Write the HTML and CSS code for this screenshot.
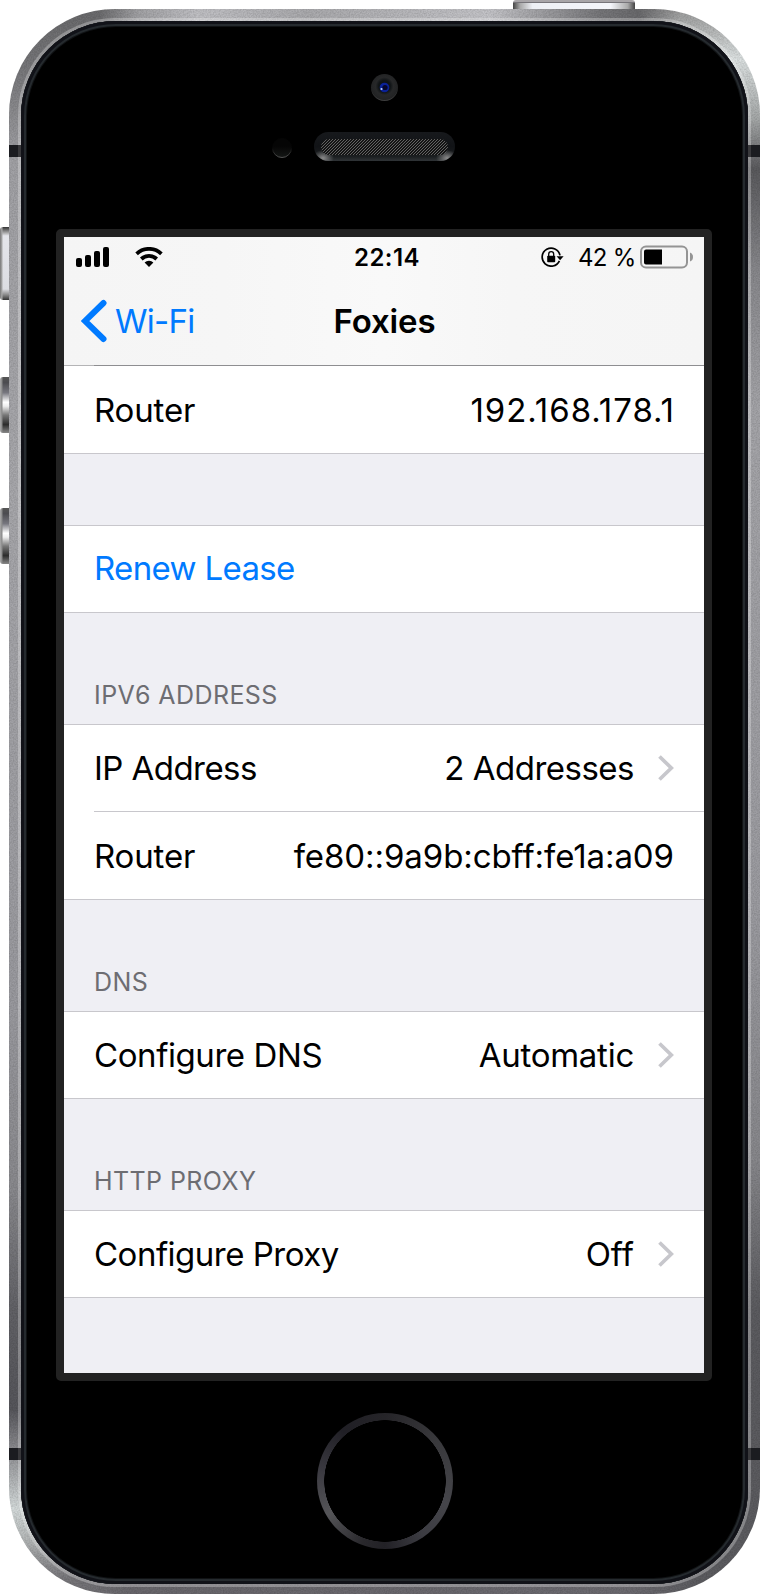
FILE: index.html
```
<!DOCTYPE html>
<html lang="en">
<head>
<meta charset="utf-8">
<title>Foxies</title>
<link rel="stylesheet" href="styles.css">
</head>
<body>
<div class="device">
  <span class="key power"></span>
  <span class="key mute"></span>
  <span class="key vol-up"></span>
  <span class="key vol-down"></span>
  <div class="shell">
    <svg class="grain" width="751" height="1585" aria-hidden="true">
      <filter id="noise"><feTurbulence type="fractalNoise" baseFrequency=".7" numOctaves="2"/><feColorMatrix type="matrix" values="0 0 0 0 0  0 0 0 0 0  0 0 0 0 0  .6 0 0 0 -.18"/></filter>
      <rect width="751" height="1585" filter="url(#noise)" opacity=".4"/>
    </svg>
    <div class="lip"></div>
    <span class="band tl"></span><span class="band tr"></span><span class="band bl"></span><span class="band br"></span>
    <div class="face">
      <svg class="sensors" width="220" height="110" viewBox="0 0 220 110" aria-hidden="true">
        <defs>
          <radialGradient id="lens" cx=".5" cy=".45" r=".55"><stop offset="0" stop-color="#0a0f14"/><stop offset=".4" stop-color="#101416"/><stop offset=".6" stop-color="#272829"/><stop offset=".9" stop-color="#222324"/><stop offset="1" stop-color="#4a4a4a"/></radialGradient>
          <linearGradient id="dot" x2="0" y2="1"><stop offset=".4" stop-color="#050505"/><stop offset="1" stop-color="#151716"/></linearGradient>
          <linearGradient id="dotRim" x2="0" y2="1"><stop offset=".5" stop-color="#050505"/><stop offset="1" stop-color="#666"/></linearGradient>
          <linearGradient id="ear" x2="0" y2="1"><stop offset="0" stop-color="#17191c"/><stop offset=".5" stop-color="#111316"/><stop offset=".85" stop-color="#1b1e20"/><stop offset="1" stop-color="#303437"/></linearGradient>
          <radialGradient id="glint"><stop offset="0" stop-color="#8a8a8a"/><stop offset="1" stop-color="#888" stop-opacity="0"/></radialGradient>
          <pattern id="mesh" width="3" height="3" patternUnits="userSpaceOnUse"><rect width="3" height="3" fill="#141414"/><path d="M-1 4L4-1M-1 1L1-1M2 4L4 2" stroke="#6c6c6c" stroke-width=".9"/></pattern>
          <clipPath id="earClip"><rect x="64" y="72" width="141" height="29" rx="14.5"/></clipPath>
        </defs>
        <circle cx="134.500" cy="27.500" r="13.500" fill="url(#lens)"/>
        <circle cx="134.500" cy="27.500" r="4.800" fill="#0a2196"/>
        <circle cx="135" cy="27.500" r="2.600" fill="#05062b"/>
        <circle cx="131.500" cy="29" r="1.100" fill="#bcd3ff"/>
        <circle cx="32" cy="88" r="9.500" fill="url(#dot)" stroke="url(#dotRim)" stroke-width=".8"/>
        <g clip-path="url(#earClip)">
          <rect x="64" y="72" width="141" height="29" fill="url(#ear)"/>
          <ellipse cx="73" cy="98" rx="11" ry="8" fill="url(#glint)"/>
          <ellipse cx="197" cy="98" rx="11" ry="8" fill="url(#glint)"/>
        </g>
        <rect x="71" y="79" width="127" height="16" rx="8" fill="url(#mesh)"/>
      </svg>
      <main class="screen">
        <header class="nav">
          <div class="status">
            <svg class="signal" width="34" height="20" viewBox="0 0 34 20"><rect y="11" width="6" height="9" rx="2"/><rect x="9" y="8" width="6" height="12" rx="2"/><rect x="18" y="4" width="6" height="16" rx="2"/><rect x="27" width="6" height="20" rx="2"/></svg>
            <svg class="wifi" width="28" height="20" viewBox="0 0 28 20"><path d="M1.600 6.800a18 18 0 0 1 24.800 0M6.300 12a11.200 11.200 0 0 1 15.400 0" fill="none" stroke="#000" stroke-width="3.800"/><path d="M14 20l-4.400-4.500a6.300 6.300 0 0 1 8.800 0z"/></svg>
            <time class="clock">22:14</time>
            <svg class="lock" width="23" height="20" viewBox="0 0 23 20"><path d="M18.400 13.800A9 9 0 1 1 19 8.400" fill="none" stroke="#000" stroke-width="1.700"/><path d="M15.600 9.200h7l-3.500 4z"/><rect x="6.200" y="8.700" width="8" height="6.500" rx=".8"/><path d="M7.700 9V7.200a2.500 2.500 0 0 1 5 0V9" fill="none" stroke="#000" stroke-width="1.300"/></svg>
            <span class="percent">42 %</span>
            <svg class="battery" width="54" height="24" viewBox="0 0 54 24"><rect x="1" y="1.500" width="46" height="21" rx="5" fill="none" stroke="#949494" stroke-width="2"/><path d="M6 4.500h16v15H6a2 2 0 0 1-2-2v-11a2 2 0 0 1 2-2z"/><path d="M50 7.500q3 1 3 4.500t-3 4.500z" fill="#949494"/></svg>
          </div>
          <div class="bar">
            <a class="back"><svg width="26" height="44" viewBox="0 0 26 44"><path d="M22.500 4L4 22l18.500 18" fill="none" stroke="#007aff" stroke-width="6" stroke-linecap="round" stroke-linejoin="miter"/></svg><span>Wi-Fi</span></a>
            <h1 class="title">Foxies</h1>
          </div>
        </header>
        <section class="group under-nav">
          <div class="row"><span class="k-router">Router</span><span class="v v-ip4">192.168.178.1</span></div>
        </section>
        <section class="group spaced">
          <div class="row"><a class="action">Renew Lease</a></div>
        </section>
        <h2 class="heading">IPV6 ADDRESS</h2>
        <section class="group">
          <div class="row inset"><span class="k-ip">IP Address</span><span class="v v-addr">2 Addresses</span><svg class="chev" width="16" height="26" viewBox="0 0 16 26"><path d="M1.500 1.500L13.300 13 1.500 24.500" /></svg></div>
          <div class="row"><span class="k-router">Router</span><span class="v v-ip6">fe80::9a9b:cbff:fe1a:a09</span></div>
        </section>
        <h2 class="heading">DNS</h2>
        <section class="group">
          <div class="row"><span class="k-dns">Configure DNS</span><span class="v v-auto">Automatic</span><svg class="chev" width="16" height="26" viewBox="0 0 16 26"><path d="M1.500 1.500L13.300 13 1.500 24.500" /></svg></div>
        </section>
        <h2 class="heading">HTTP PROXY</h2>
        <section class="group">
          <div class="row"><span class="k-proxy">Configure Proxy</span><span class="v v-off">Off</span><svg class="chev" width="16" height="26" viewBox="0 0 16 26"><path d="M1.500 1.500L13.300 13 1.500 24.500" /></svg></div>
        </section>
      </main>
      <span class="home"></span>
    </div>
  </div>
</div>
</body>
</html>
```
FILE: styles.css
```
* { box-sizing: border-box; }
body { margin: 0; background: #fff; font-family: Inter, "Liberation Sans", sans-serif; color: #000; }
.device { position: relative; width: 760px; height: 1594px; padding: 9px 0 0 9px; overflow: hidden; }

.key { position: absolute; }
.power { left: 513px; top: 0; width: 122px; height: 10px; border-radius: 3px 3px 0 0; background: linear-gradient(#a8a5a8 0 2px, #77757a 2px 3px, transparent 3px), linear-gradient(90deg, #444 0, #aaa 6%, #eef0f5 16%, #f4f5fa 80%, #aaa 94%, #444); }
.mute { left: 0; top: 227px; width: 10px; height: 73px; border-radius: 3px 0 0 3px; background: linear-gradient(90deg, #777 0, #aaa 2px, transparent 3px), linear-gradient(#333 0, #aaa 8%, #e4e5ea 12%, #dcdde2 85%, #888 93%, #333); }
.vol-up, .vol-down { left: 0; width: 10px; height: 56px; border-radius: 3px 0 0 3px; background: linear-gradient(90deg, #aaa 0, #888 2px, transparent 3px), linear-gradient(#555 0, #4c4c50 10%, #77777f 28%, #fff 45%, #eee 52%, #777 68%, #2c2c2c 85%, #888); }
.vol-up { top: 377px; }
.vol-down { top: 508px; }

.shell { position: relative; width: 751px; height: 1585px; padding: 12px 12px 10px; border-radius: 106px; overflow: hidden;
  background:
    linear-gradient(90deg, transparent 0 90px, #a2a2a5 130px, #c0c0c4 190px, #aaaaad 300px, #c4c4c8 480px, #77777a 590px, #6a6a6d 630px, transparent 670px) 0 0 / 100% 30px no-repeat,
    linear-gradient(90deg, transparent 0 60px, #69676c 120px, #6c6a70 620px, transparent 690px) 0 100% / 100% 26px no-repeat,
    linear-gradient(#6a6a6c 0, #77777a 60px, #a2a2a6 150px, #a8a8ac 480px, #9a9a9f 1000px, #8a8a8e 1180px, #626267 1300px, #56565b 1400px, #8c8c90 1440px, #d5dbdb 1500px, #b5b8b8 1530px, #77767a 1570px) 0 0 / 50% 100% no-repeat,
    linear-gradient(#999 0, #dde2e2 50px, #a5a8a8 110px, #5a5a5d 160px, #88888c 260px, #a5a5a9 400px, #9c9ca1 900px, #88888c 1150px, #5c5c60 1300px, #5c5c60 1585px) 100% 0 / 50% 100% no-repeat; }
.grain { position: absolute; inset: 0; }
.lip { position: absolute; inset: 9px 9px 7px; border-radius: 97px; background: rgba(255,255,255,.28); }
.band { position: absolute; width: 14px; height: 12px; background: linear-gradient(90deg, #1b1c20 9px, #38383b 9px); }
.tl { left: 0; top: 136px; } .tr { right: 0; top: 136px; transform: scaleX(-1); }
.bl { left: 0; top: 1439px; } .br { right: 0; top: 1439px; transform: scaleX(-1); }

.face { position: relative; display: flex; flex-direction: column; align-items: center; width: 727px; height: 1563px; padding-top: 39px; border-radius: 95px; background: #000; box-shadow: inset 0 0 0 3px #111218, inset 0 0 0 5px #252a2e, inset 0 0 0 6px #101214; }
.sensors { flex: none; width: 220px; height: 110px; margin-left: -49px; }
.screen { flex: none; width: 656px; height: 1152px; margin: 59px 0 0 -1px; border: 8px solid #222; border-radius: 5px; background: #efeff4; overflow: hidden; }
.home { flex: none; width: 136px; height: 136px; margin: 32px 0 0 1px; border-radius: 50%; background: radial-gradient(circle, #000 60.500px, transparent 61px), conic-gradient(#252428 0, #38383b 50deg, #45454a 110deg, #3c3c42 145deg, #222126 180deg, #29282c 200deg, #555558 240deg, #3a3940 280deg, #201f25 320deg, #252428 360deg); }

.nav { display: flex; flex-direction: column; height: 129px; background: linear-gradient(90deg, #b4b4b6 30px, #8e8e91 30px) 0 100% / 100% 1px no-repeat, linear-gradient(90deg, #f5f5f5, #f6f6f6 25%, #f9f9f9 50%, #f6f6f6 70%, #f5f5f5); }
.status { display: flex; align-items: center; height: 40px; padding: 0 10px 0 12px; }
.wifi { margin-left: 25px; }
.clock { margin-left: 191px; width: 67px; font-size: 24px; font-weight: 600; letter-spacing: .45px; white-space: nowrap; }
.lock { margin-left: 120px; }
.percent { margin-left: 14px; width: 58px; font-size: 24px; letter-spacing: -.7px; white-space: nowrap; }
.battery { margin-left: 4px; }
.status svg, .chev, .back svg { flex: none; display: block; }
.bar { display: grid; grid-template-columns: 1fr auto 1fr; align-items: center; height: 88px; padding: 0 17px; }
.back { display: flex; align-items: center; gap: 8px; color: #007aff; font-size: 33px; letter-spacing: -.7px; }
.title { margin: 0 -1px 0 0; font-size: 33px; font-weight: 600; letter-spacing: -.15px; }

.group { background: #fff; border-top: 1px solid #c8c7cc; }
.under-nav { border-top: 0; }
.spaced { margin-top: 71px; }
.row { display: flex; align-items: center; height: 87px; padding: 0 30px; border-bottom: 1px solid #c8c7cc; font-size: 33px; white-space: nowrap; }
.under-nav .row, .row + .row { height: 88px; }
.inset { margin-left: 30px; padding-left: 0; }
.v { margin-left: auto; }
.k-router { letter-spacing: -.15px; }
.k-ip { letter-spacing: -.55px; }
.k-dns { letter-spacing: -.42px; }
.k-proxy { letter-spacing: -.5px; }
.v-ip4 { letter-spacing: .95px; margin-right: -1px; }
.v-addr { letter-spacing: -.5px; }
.v-ip6 { letter-spacing: -.08px; }
.v-auto { letter-spacing: -.25px; }
.action { color: #007aff; letter-spacing: -.65px; padding-bottom: 2px; }
.chev { margin-left: 24px; }
.chev path { fill: none; stroke: #c7c7cc; stroke-width: 3.7; }
.heading { display: flex; align-items: flex-end; height: 111px; margin: 0; padding: 0 30px 14px; color: #6d6d72; font-size: 25px; font-weight: 400; letter-spacing: .42px; }
```
